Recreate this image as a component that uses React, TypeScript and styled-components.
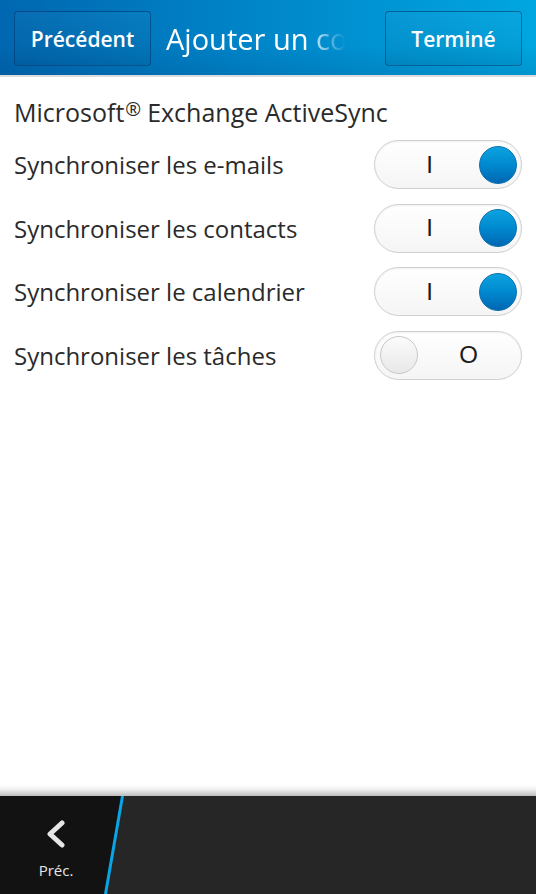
import React from "react";
import styled, { createGlobalStyle } from "styled-components";

const Global = createGlobalStyle`
  html, body { margin: 0; padding: 0; background: #ffffff; }
  body { font-family: "Open Sans", "Noto Sans", sans-serif; }
  #root { width: 536px; height: 894px; }
`;

const Screen = styled.div`
  width: 536px;
  height: 894px;
  display: flex;
  flex-direction: column;
  background: #ffffff;
  overflow: hidden;
`;

const Header = styled.header`
  height: 77px;
  flex: none;
  box-sizing: border-box;
  padding: 11px 14px 0 14px;
  display: flex;
  align-items: flex-start;
  gap: 15px;
  background: linear-gradient(180deg, rgba(0,0,0,0) 60%, rgba(0,30,80,0.12) 100%),
    linear-gradient(90deg, #0067b0 0%, #0084c8 45%, #00a6e0 100%);
  border-bottom: 2px solid #dcdcdc;
`;

const HeaderButton = styled.button<{ $w: number }>`
  width: ${(p) => p.$w}px;
  height: 55px;
  flex: none;
  box-sizing: border-box;
  border: 1px solid rgba(0, 40, 90, 0.45);
  border-radius: 4px;
  background: linear-gradient(180deg, rgba(255,255,255,0.03), rgba(0,0,0,0.05));
  color: #ffffff;
  font-family: "Open Sans", "Noto Sans", sans-serif;
  font-weight: 600;
  font-size: 21px;
  padding: 0;
  display: flex;
  align-items: center;
  justify-content: center;
`;

const Title = styled.div`
  flex: 1;
  min-width: 0;
  height: 55px;
  display: flex;
  align-items: center;
  color: #ffffff;
  font-size: 29px;
  white-space: nowrap;
  overflow: hidden;
  -webkit-mask-image: linear-gradient(90deg, #000 0%, #000 68%, rgba(0,0,0,0) 88%);
  mask-image: linear-gradient(90deg, #000 0%, #000 68%, rgba(0,0,0,0) 88%);
`;

const Content = styled.main`
  flex: 1;
  display: flex;
  flex-direction: column;
  padding: 14px 14px 0 14px;
`;

const SectionTitle = styled.div`
  font-size: 25px;
  color: #2a2a2a;
  height: 36px;
  line-height: 36px;
  margin-bottom: 6px;
  white-space: nowrap;
`;

const Reg = styled.span`
  font-size: 19px;
  vertical-align: 6px;
  margin: 0 6px 0 1px;
`;

const Row = styled.div`
  height: 63.5px;
  display: flex;
  align-items: center;
  justify-content: space-between;
`;

const Label = styled.span`
  font-size: 24px;
  color: #2a2a2a;
`;

const Toggle = styled.div<{ $on: boolean }>`
  width: 148px;
  height: 49px;
  box-sizing: border-box;
  border: 1px solid #cfcfcf;
  border-radius: 25px;
  background: linear-gradient(180deg, #ffffff 0%, #f5f5f5 100%);
  box-shadow: inset 0 1px 2px rgba(0,0,0,0.06);
  display: flex;
  flex-direction: ${(p) => (p.$on ? "row" : "row-reverse")};
  align-items: center;
  padding: 0 4px 0 5px;
`;

const Mark = styled.span<{ $on: boolean }>`
  flex: 1;
  text-align: center;
  font-size: 24px;
  color: #1c1c1c;
  font-family: "Liberation Sans", "Open Sans", sans-serif;
  padding-left: ${(p) => (p.$on ? "0px" : "2px")};
`;

const Knob = styled.span<{ $on: boolean }>`
  width: 38px;
  height: 38px;
  border-radius: 50%;
  box-sizing: border-box;
  flex: none;
  background: ${(p) =>
    p.$on
      ? "linear-gradient(180deg, #0aa3e0 0%, #0089cf 50%, #0067b2 100%)"
      : "linear-gradient(180deg, #fbfbfb 0%, #e8e8e8 100%)"};
  border: 1px solid ${(p) => (p.$on ? "#0a6fb0" : "#c8c8c8")};
`;

const BottomShadow = styled.div`
  height: 11px;
  flex: none;
  background: linear-gradient(180deg, #ffffff 0%, #f0f0f0 40%, #bdbdbd 100%);
`;

const ActionBar = styled.footer`
  height: 98px;
  flex: none;
  position: relative;
  background: #262626;
  display: flex;
`;

const BackArea = styled.div`
  width: 122px;
  height: 100%;
  flex: none;
  display: flex;
  flex-direction: column;
  align-items: center;
  clip-path: polygon(0 0, 123px 0, 106px 100%, 0 100%);
  background: #121212;
  padding-right: 10px;
  box-sizing: border-box;
`;

const Slash = styled.svg`
  position: absolute;
  left: 100px;
  top: 0;
`;

const BackIcon = styled.svg`
  margin-top: 24px;
`;

const BackLabel = styled.span`
  margin-top: 12px;
  color: #e6e6e6;
  font-size: 15px;
`;

const rows = [
  { label: "Synchroniser les e-mails", on: true },
  { label: "Synchroniser les contacts", on: true },
  { label: "Synchroniser le calendrier", on: true },
  { label: "Synchroniser les tâches", on: false },
];

export default function App() {
  return (
    <Screen>
      <Global />
      <Header>
        <HeaderButton $w={137}>Précédent</HeaderButton>
        <Title>Ajouter un compte</Title>
        <HeaderButton $w={137}>Terminé</HeaderButton>
      </Header>
      <Content>
        <SectionTitle>
          Microsoft<Reg>®</Reg>Exchange ActiveSync
        </SectionTitle>
        {rows.map((r) => (
          <Row key={r.label}>
            <Label>{r.label}</Label>
            <Toggle $on={r.on}>
              <Mark $on={r.on}>{r.on ? "I" : "O"}</Mark>
              <Knob $on={r.on} />
            </Toggle>
          </Row>
        ))}
      </Content>
      <BottomShadow />
      <ActionBar>
        <BackArea>
          <BackIcon width="24" height="28" viewBox="0 0 24 28">
            <path d="M18 3 L6 14 L18 25" fill="none" stroke="#e6e6e6" strokeWidth="5" strokeLinecap="round" strokeLinejoin="round" />
          </BackIcon>
          <BackLabel>Préc.</BackLabel>
        </BackArea>
        <Slash width="30" height="98" viewBox="0 0 30 98">
          <line x1="22.5" y1="0" x2="5.5" y2="98" stroke="#0aa5e6" strokeWidth="3" />
        </Slash>
      </ActionBar>
    </Screen>
  );
}
